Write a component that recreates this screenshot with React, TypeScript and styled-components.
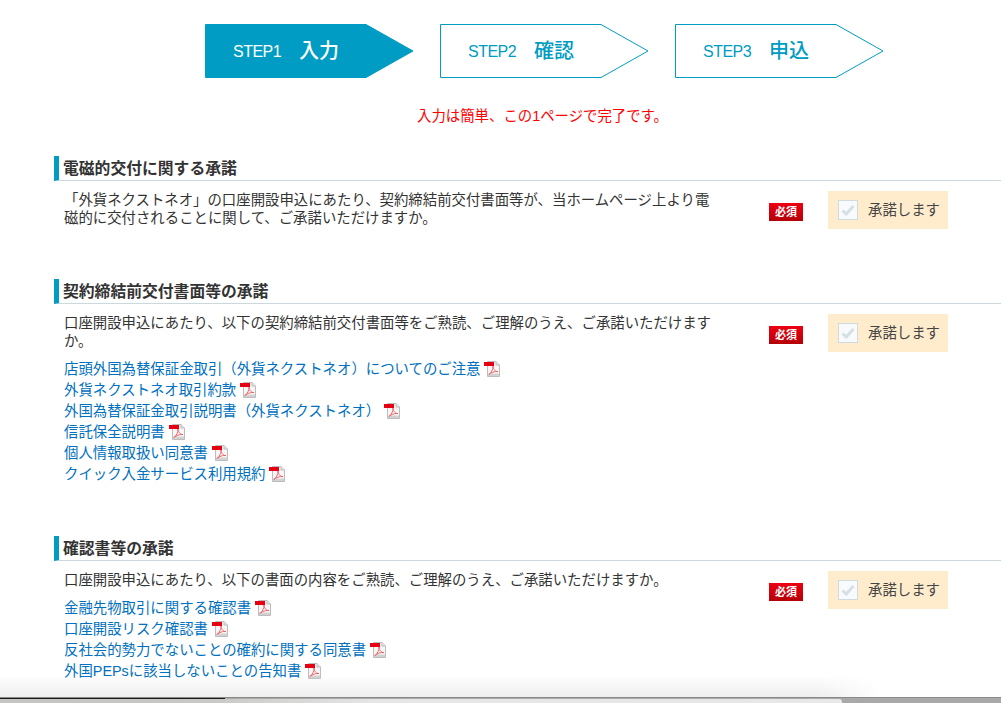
import React from 'react'
import styled, { createGlobalStyle } from 'styled-components'

const GlobalStyle = createGlobalStyle`
  html, body {
    margin: 0;
    padding: 0;
    height: 100%;
    overflow: hidden;
    background: #fff;
  }
  body {
    color: #333;
    font-family: "Liberation Sans", "Noto Sans CJK JP", sans-serif;
    font-size: 14.4px;
    line-height: 18px;
  }
`

const Page = styled.div`
  padding-top: 24px;
`

const Stepper = styled.ol`
  display: flex;
  justify-content: center;
  gap: 26px;
  margin: 0;
  padding: 0 0 0 88px;
  list-style: none;
`

const Step = styled.li<{ $active?: boolean }>`
  position: relative;
  display: flex;
  align-items: center;
  width: 209px;
  height: 54px;
  padding-left: 28px;
  box-sizing: border-box;
  color: ${(p) => (p.$active ? '#fff' : '#009cc3')};
`

const StepShape = styled.svg`
  position: absolute;
  left: 0;
  top: 0;
`

const StepNo = styled.span`
  position: relative;
  width: 66px;
  margin-top: 1px;
  font-size: 16px;
  letter-spacing: -0.5px;
`

const StepName = styled.span`
  position: relative;
  font-size: 20px;
  font-weight: 500;
`

const Notice = styled.p`
  margin: 29px 0 31px;
  padding-left: 84px;
  color: #f00;
  text-align: center;
`

const Section = styled.section`
  margin: 0 0 50px 54px;
`

const Heading = styled.h2`
  margin: 0;
  height: 24px;
  padding-left: 4px;
  border-left: 5px solid #009cc3;
  border-bottom: 1px solid #cbd8de;
  font-size: 15.8px;
  font-weight: 700;
  line-height: 26px;
`

const Row = styled.div`
  display: flex;
  padding: 10px 0 0 10px;
`

const Body = styled.div`
  width: 650px;
`

const Lead = styled.p`
  margin: 0;
`

const Links = styled.ul`
  margin: 8px 0 2px;
  padding: 0;
  list-style: none;
`

const LinkItem = styled.li`
  display: flex;
  align-items: center;
  height: 21px;
`

const DocLink = styled.a`
  color: #0070c0;
  text-decoration: none;
  white-space: nowrap;
`

const Required = styled.span`
  flex: none;
  width: 34px;
  height: 18px;
  margin: 12px 25px 0 55px;
  background: linear-gradient(#ee0012, #b40008);
  color: #fff;
  font-size: 11px;
  font-weight: 700;
  line-height: 18px;
  text-align: center;
`

const Consent = styled.label`
  flex: none;
  display: flex;
  align-items: center;
  gap: 10px;
  width: 120px;
  height: 38px;
  padding-left: 10px;
  box-sizing: border-box;
  background: #ffeccc;
  color: #444;
  white-space: nowrap;
`

const CheckBox = styled.span`
  display: flex;
  align-items: center;
  justify-content: center;
  width: 20px;
  height: 20px;
  box-sizing: border-box;
  border: 1px solid #cfdbe1;
  background: #f8fafb;
`

const WindowEdge = styled.div`
  position: fixed;
  left: 0;
  right: 0;
  bottom: 0;
  height: 28px;
`

const EdgeShadow = styled.div`
  position: absolute;
  left: 0;
  top: 0;
  width: 880px;
  height: 23px;
  background: linear-gradient(rgba(225, 225, 225, 0), rgba(225, 225, 225, 0.6));
  -webkit-mask-image: linear-gradient(to right, #000 93%, transparent);
  mask-image: linear-gradient(to right, #000 93%, transparent);
`

const EdgeBar = styled.div`
  position: absolute;
  left: 0;
  right: 0;
  bottom: 0;
  height: 5px;
  border-top: 1px solid #8a8a8a;
  background: #a9a9a9;
`

const EdgeBlack = styled.div`
  position: absolute;
  left: 0;
  bottom: 4px;
  width: 225px;
  height: 1px;
  background: #1a1a1a;
`

const EdgeTab = styled.div`
  position: absolute;
  left: 0;
  bottom: 0;
  width: 842px;
  height: 4px;
  background: linear-gradient(to right, #c4c4c2, #c8c8c6 25%, #e6e6e6 45%, #e8e8e8);
  border-top-right-radius: 3px;
`

const steps = [
  { no: 'STEP1', name: '入力', active: true },
  { no: 'STEP2', name: '確認' },
  { no: 'STEP3', name: '申込' },
]

const sections = [
  {
    title: '電磁的交付に関する承諾',
    lead: '「外貨ネクストネオ」の口座開設申込にあたり、契約締結前交付書面等が、当ホームページ上より電磁的に交付されることに関して、ご承諾いただけますか。',
    links: [],
  },
  {
    title: '契約締結前交付書面等の承諾',
    lead: '口座開設申込にあたり、以下の契約締結前交付書面等をご熟読、ご理解のうえ、ご承諾いただけますか。',
    links: [
      '店頭外国為替保証金取引（外貨ネクストネオ）についてのご注意',
      '外貨ネクストネオ取引約款',
      '外国為替保証金取引説明書（外貨ネクストネオ）',
      '信託保全説明書',
      '個人情報取扱い同意書',
      'クイック入金サービス利用規約',
    ],
  },
  {
    title: '確認書等の承諾',
    lead: '口座開設申込にあたり、以下の書面の内容をご熟読、ご理解のうえ、ご承諾いただけますか。',
    links: [
      '金融先物取引に関する確認書',
      '口座開設リスク確認書',
      '反社会的勢力でないことの確約に関する同意書',
      '外国PEPsに該当しないことの告知書',
    ],
  },
]

const PdfIcon = () => (
  <svg width="17" height="16" viewBox="0 0 17 16" style={{ marginLeft: 4, flex: 'none' }}>
    <path d="M3.5 .5H12L15.5 4V15.5H3.5Z" fill="#f6f6f6" stroke="#bcbcbc" />
    <path d="M12 .5V4H15.5" fill="#e4e4e4" stroke="#bcbcbc" />
    <rect x="4" y="12.5" width="11" height="2.5" fill="#d2d2d2" />
    <rect x="0" y="1" width="10" height="4" fill="#e60012" />
    <path d="M9 5C9.5 8 7 12 5 13.5C7 11.5 11 10 14 10.5C12 11 9 8.5 9 5Z" fill="none" stroke="#ee5a62" strokeWidth="0.9" />
  </svg>
)

const Tick = () => (
  <svg width="14" height="12" viewBox="0 0 14 12">
    <path d="M1.5 6.5L5.2 10L12.5 2" fill="none" stroke="#d5e0e6" strokeWidth="3" />
  </svg>
)

export default function App() {
  return (
    <Page>
      <GlobalStyle />
      <Stepper>
        {steps.map((s) => (
          <Step key={s.no} $active={s.active}>
            <StepShape width="209" height="54" viewBox="0 0 209 54">
              <path
                d="M.5 .5H161L208 27L161 53.5H.5Z"
                fill={s.active ? '#009cc3' : '#fff'}
                stroke="#009cc3"
              />
            </StepShape>
            <StepNo>{s.no}</StepNo>
            <StepName>{s.name}</StepName>
          </Step>
        ))}
      </Stepper>
      <Notice>入力は簡単、この1ページで完了です。</Notice>
      {sections.map((sec) => (
        <Section key={sec.title}>
          <Heading>{sec.title}</Heading>
          <Row>
            <Body>
              <Lead>{sec.lead}</Lead>
              {sec.links.length > 0 && (
                <Links>
                  {sec.links.map((l) => (
                    <LinkItem key={l}>
                      <DocLink href="#">{l}</DocLink>
                      <PdfIcon />
                    </LinkItem>
                  ))}
                </Links>
              )}
            </Body>
            <Required>必須</Required>
            <Consent>
              <CheckBox>
                <Tick />
              </CheckBox>
              承諾します
            </Consent>
          </Row>
        </Section>
      ))}
      <WindowEdge>
        <EdgeShadow />
        <EdgeBar />
        <EdgeTab />
        <EdgeBlack />
      </WindowEdge>
    </Page>
  )
}
